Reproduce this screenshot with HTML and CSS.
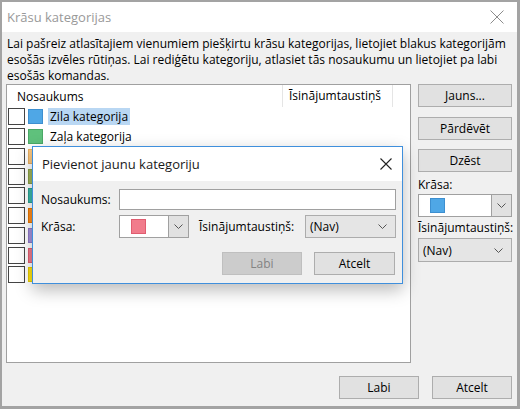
FILE: index.html
```html
<!DOCTYPE html>
<html lang="lv">
<head>
    <meta charset="UTF-8">
    <meta name="viewport" content="width=device-width, initial-scale=1.0">
    <title>Krāsu kategorijas</title>
    <link rel="stylesheet" href="styles.css">
</head>
<body>
    <div class="window">
        <div class="titlebar">
            <span class="title">Krāsu kategorijas</span>
            <svg class="close" width="14" height="14" viewBox="0 0 14 14">
                <path d="M0.5 0.5 L13.5 13.5 M13.5 0.5 L0.5 13.5" stroke="#8c8c8c" stroke-width="1" fill="none"/>
            </svg>
        </div>

        <div class="content">
            <p class="intro">Lai pašreiz atlasītajiem vienumiem piešķirtu krāsu kategorijas, lietojiet blakus kategorijām<br>esošās izvēles rūtiņas. Lai rediģētu kategoriju, atlasiet tās nosaukumu un lietojiet pa labi<br>esošās komandas.</p>

            <div class="main">
                <div class="list">
                    <div class="list-head">
                        <span class="col-name">Nosaukums</span>
                        <span class="col-key">Īsinājumtaustiņš</span>
                    </div>
                    <div class="row"><span class="check"></span><span class="swatch blue"></span><span class="name selected">Zila kategorija</span></div>
                    <div class="row"><span class="check"></span><span class="swatch green"></span><span class="name">Zaļa kategorija</span></div>
                    <!-- the rest of the rows sit under the dialog -->
                    <div class="row"><span class="check"></span><span class="swatch peach"></span></div>
                    <div class="row"><span class="check"></span><span class="swatch olive"></span></div>
                    <div class="row"><span class="check"></span><span class="swatch teal"></span></div>
                    <div class="row"><span class="check"></span><span class="swatch orange"></span></div>
                    <div class="row"><span class="check"></span><span class="swatch purple"></span></div>
                    <div class="row"><span class="check"></span><span class="swatch red"></span></div>
                    <div class="row"><span class="check"></span><span class="swatch yellow"></span></div>
                </div>

                <div class="side">
                    <button class="btn">Jauns...</button>
                    <button class="btn btn-rename">Pārdēvēt</button>
                    <button class="btn btn-delete">Dzēst</button>
                    <label class="side-label">Krāsa:</label>
                    <div class="combo side-combo">
                        <span class="combo-value"><span class="swatch blue"></span></span>
                        <span class="combo-arrow">
                            <svg width="9" height="5" viewBox="0 0 9 5"><polyline points="0.5,0.5 4.5,4.5 8.5,0.5" fill="none" stroke="#555" stroke-width="1"/></svg>
                        </span>
                    </div>
                    <label class="side-label side-label-key">Īsinājumtaustiņš:</label>
                    <div class="select side-select">
                        <span>(Nav)</span>
                        <svg width="9" height="5" viewBox="0 0 9 5"><polyline points="0.5,0.5 4.5,4.5 8.5,0.5" fill="none" stroke="#555" stroke-width="1"/></svg>
                    </div>
                </div>
            </div>

            <div class="footer">
                <button class="btn btn-footer">Labi</button>
                <button class="btn btn-footer">Atcelt</button>
            </div>
        </div>

        <div class="dialog">
            <div class="dialog-title">
                <span>Pievienot jaunu kategoriju</span>
                <svg width="12" height="12" viewBox="0 0 12 12">
                    <path d="M0.5 0.5 L11.5 11.5 M11.5 0.5 L0.5 11.5" stroke="#222" stroke-width="1.1" fill="none"/>
                </svg>
            </div>
            <div class="dialog-body">
                <div class="field">
                    <label class="field-label">Nosaukums:</label>
                    <input type="text" class="text-input">
                </div>
                <div class="field field-color">
                    <label class="field-label">Krāsa:</label>
                    <div class="combo dialog-combo">
                        <span class="combo-value"><span class="swatch red"></span></span>
                        <span class="combo-arrow">
                            <svg width="9" height="5" viewBox="0 0 9 5"><polyline points="0.5,0.5 4.5,4.5 8.5,0.5" fill="none" stroke="#555" stroke-width="1"/></svg>
                        </span>
                    </div>
                    <label class="key-label">Īsinājumtaustiņš:</label>
                    <div class="select dialog-select">
                        <span>(Nav)</span>
                        <svg width="9" height="5" viewBox="0 0 9 5"><polyline points="0.5,0.5 4.5,4.5 8.5,0.5" fill="none" stroke="#555" stroke-width="1"/></svg>
                    </div>
                </div>
                <div class="dialog-buttons">
                    <button class="btn btn-ok" disabled>Labi</button>
                    <button class="btn btn-cancel">Atcelt</button>
                </div>
            </div>
        </div>
    </div>
</body>
</html>
```

FILE: styles.css
```css
body {
    margin: 0;
    font-family: "Open Sans", "Noto Sans", sans-serif;
    font-size: 12px;
    color: #000;
}

.window {
    position: relative;
    width: 520px;
    height: 409px;
    box-sizing: border-box;
    border-style: solid;
    border-color: #a3a3a3;
    border-width: 2px 3px 3px 2px;
    background-color: #f0f0f0;
    display: flex;
    flex-direction: column;
}

.titlebar {
    height: 30px;
    background-color: #fff;
    display: flex;
    align-items: center;
    justify-content: space-between;
    padding: 0 13px 0 5px;
}

.title {
    font-size: 13px;
    color: #999;
}

.content {
    flex: 1;
    padding: 4px 5px 0 4px;
}

.intro {
    margin: 0 0 0 1px;
    line-height: 16px;
    height: 48px;
    white-space: nowrap;
}

.main {
    display: flex;
    gap: 7px;
}

/* category list */
.list {
    width: 405px;
    height: 279px;
    box-sizing: border-box;
    border: 1px solid #a0a0a0;
    background-color: #fff;
}

.list-head {
    display: flex;
    height: 22px;
    align-items: center;
}

.col-name {
    width: 265px;
    padding-left: 10px;
}

.col-key {
    width: 103px;
    height: 22px;
    line-height: 22px;
    padding-left: 6px;
    border-left: 1px solid #e5e5e5;
    border-right: 1px solid #e5e5e5;
}

.row {
    display: flex;
    align-items: center;
    height: 19.75px;
}

.check {
    width: 15px;
    height: 15px;
    margin-left: 1px;
    border: 1px solid #444;
    background-color: #fff;
}

.swatch {
    display: inline-block;
    width: 13px;
    height: 13px;
    border: 1px solid;
}

.row .swatch {
    margin-left: 3px;
}

.blue { background-color: #4fa7e6; border-color: #3d8fd0; }
.green { background-color: #5fc17c; border-color: #4aa866; }
.peach { background-color: #fcc77e; border-color: #e6ae62; }
.olive { background-color: #a0b55a; border-color: #889d44; }
.teal { background-color: #3cb8a8; border-color: #2b9f90; }
.orange { background-color: #ff8c1a; border-color: #e67500; }
.purple { background-color: #a591db; border-color: #8e79c6; }
.red { background-color: #f17c8c; border-color: #e05d70; }
.yellow { background-color: #ffe312; border-color: #e6cb00; }

.name {
    margin-left: 5px;
    padding: 0 2px;
    line-height: 17px;
}

.name.selected {
    background-color: #b9d7f3;
}

/* right column */
.side {
    width: 94px;
    display: flex;
    flex-direction: column;
}

.btn {
    height: 23px;
    padding: 0;
    font-family: inherit;
    font-size: 12px;
    color: #000;
    background-color: #e1e1e1;
    border: 1px solid #adadad;
    box-sizing: border-box;
}

.btn-rename {
    margin-top: 10px;
}

.btn-delete {
    margin-top: 9px;
}

.side-label {
    margin-top: 5px;
    line-height: 16px;
}

.side-label-key {
    margin-top: 3px;
}

.combo {
    display: flex;
    height: 23px;
    box-sizing: border-box;
    border: 1px solid #a0a0a0;
    background-color: #fff;
}

.combo-value {
    flex: 1;
    display: flex;
    align-items: center;
    padding-left: 11px;
}

.combo-arrow {
    width: 19px;
    display: flex;
    align-items: center;
    justify-content: center;
    background-color: #e1e1e1;
    border-left: 1px solid #a0a0a0;
}

.side-combo {
    margin-top: 1px;
}

.select {
    display: flex;
    align-items: center;
    justify-content: space-between;
    box-sizing: border-box;
    border: 1px solid #acacac;
    background-color: #e5e5e5;
    padding: 0 8px 0 4px;
}

.side-select {
    margin-top: 2px;
    height: 24px;
}

.footer {
    display: flex;
    justify-content: flex-end;
    gap: 13px;
    margin-top: 13px;
}

.btn-footer {
    width: 80px;
}

/* add category dialog */
.dialog {
    position: absolute;
    left: 30px;
    top: 144px;
    width: 371px;
    height: 138px;
    box-sizing: border-box;
    border: 1px solid #3f8fdc;
    background-color: #f0f0f0;
    box-shadow: 0 6px 16px rgba(0, 0, 0, 0.28);
}

.dialog-title {
    height: 34px;
    background-color: #fff;
    display: flex;
    align-items: center;
    justify-content: space-between;
    padding: 0 10px 0 9px;
    font-size: 13px;
    color: #1a1a1a;
}

.dialog-body {
    padding: 8px 6px 0 8px;
}

.field {
    display: flex;
    align-items: center;
}

.field-label {
    width: 78px;
}

.text-input {
    flex: 1;
    height: 21px;
    box-sizing: border-box;
    margin: 0;
    border: 1px solid #a0a0a0;
    background-color: #fff;
}

.field-color {
    margin-top: 5px;
    height: 23px;
}

.dialog-combo {
    width: 70px;
}

.key-label {
    margin-left: 10px;
}

.dialog-select {
    margin-left: auto;
    width: 91px;
    height: 23px;
}

.dialog-buttons {
    display: flex;
    justify-content: flex-end;
    gap: 12px;
    margin-top: 14px;
    padding-right: 1px;
}

.btn-ok {
    width: 80px;
    background-color: #cccccc;
    border-color: #bfbfbf;
    color: #838383;
}

.btn-cancel {
    width: 81px;
}
```
